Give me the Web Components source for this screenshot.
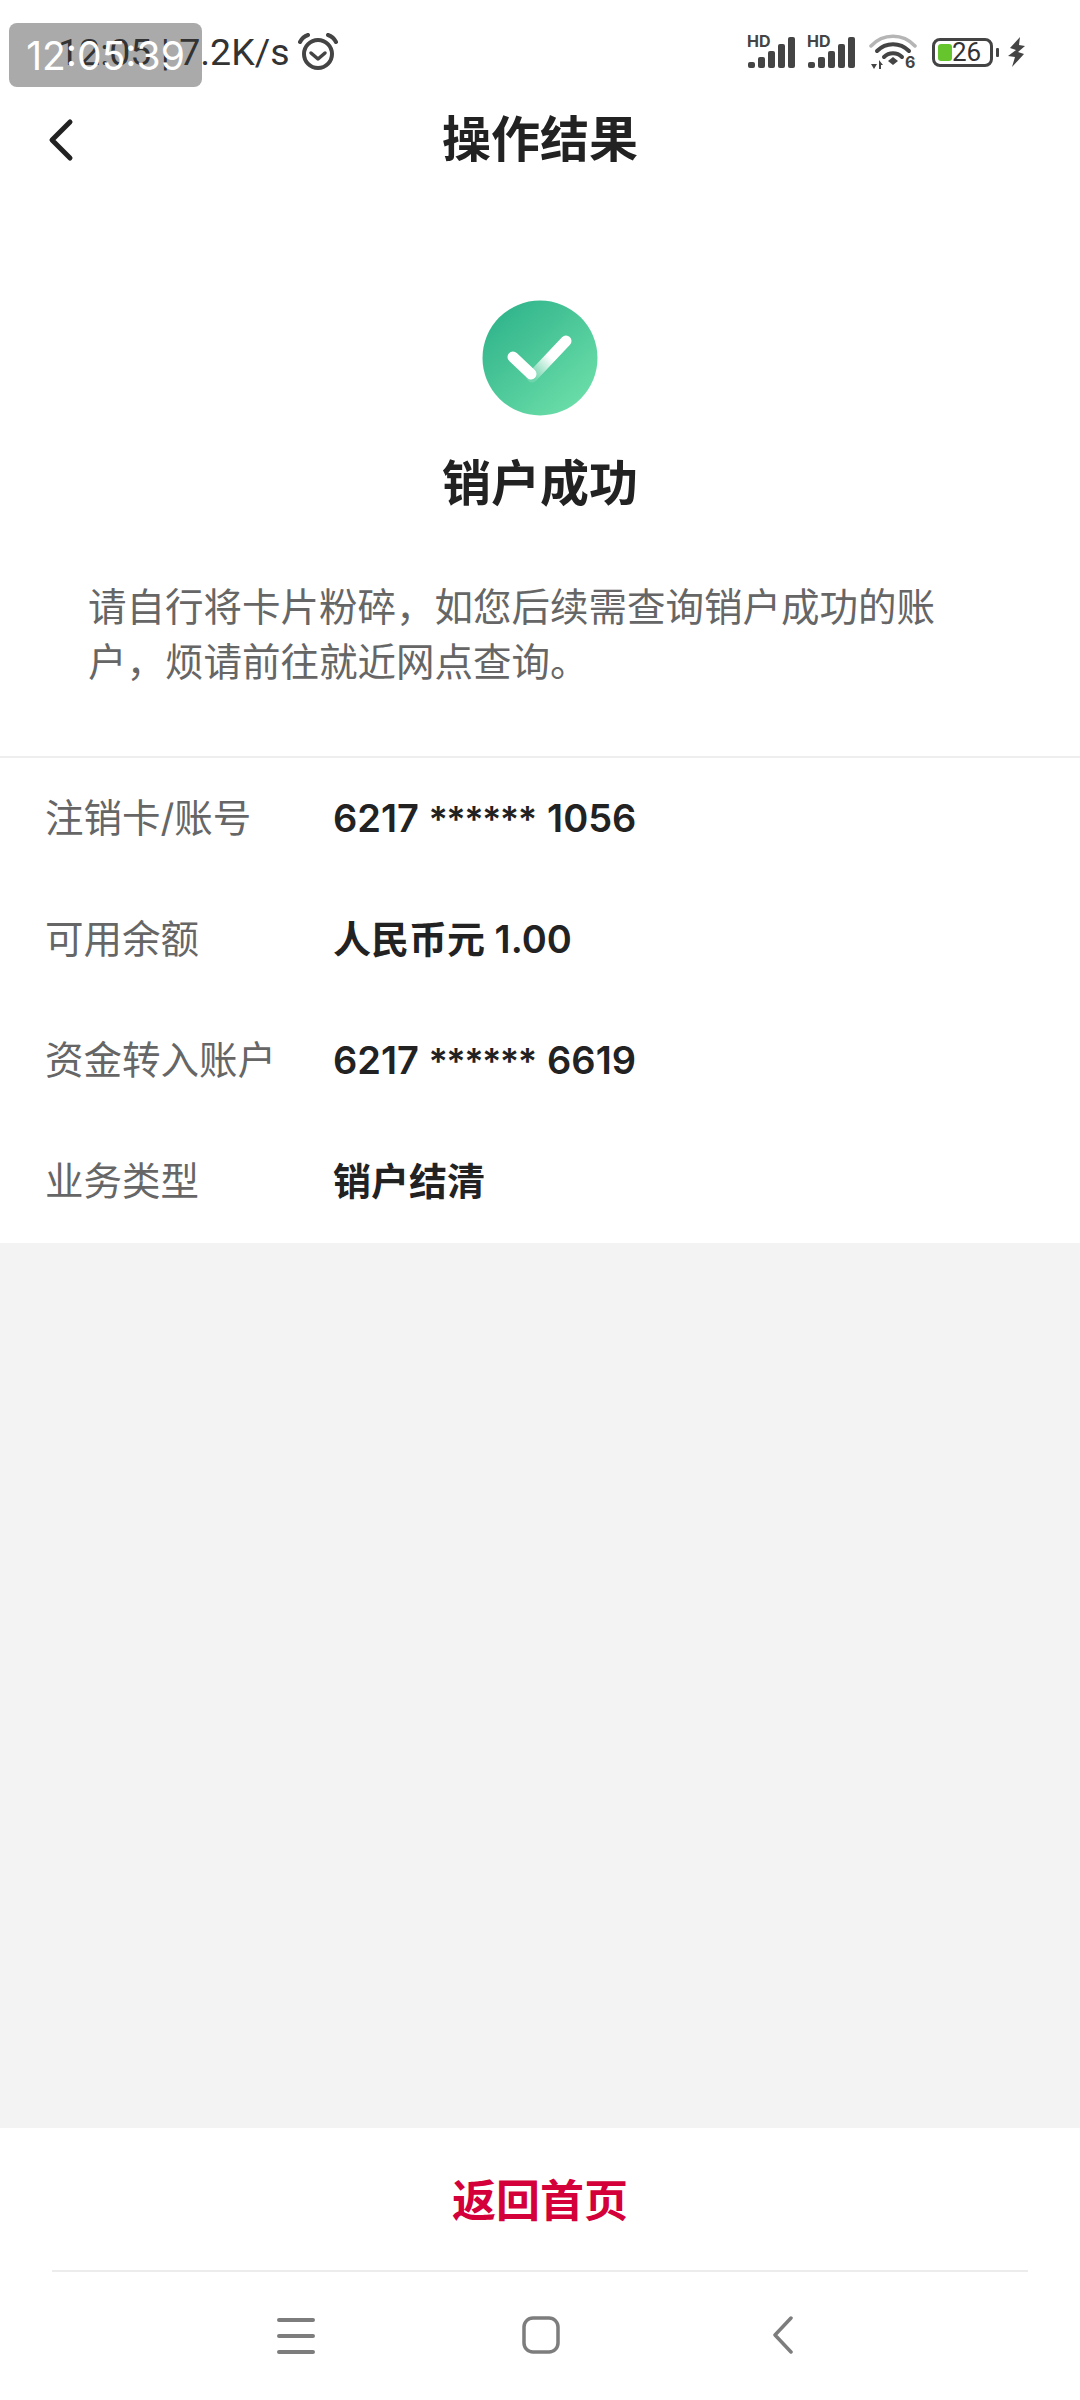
<!DOCTYPE html>
<html lang="zh">
<head>
<meta charset="utf-8">
<title>操作结果</title>
<style>
    html, body { margin: 0; padding: 0; background: #fff; }
    body { font-family: Inter, "Noto Sans CJK SC", sans-serif; }
</style>
</head>
<body>
<app-shell>
    <status-bar time="12:05" speed="7.2K/s" stamp="12:05:39" battery="26"></status-bar>
    <nav-header>操作结果</nav-header>
    <result-head title="销户成功">请自行将卡片粉碎，如您后续需查询销户成功的账户，烦请前往就近网点查询。</result-head>
    <detail-list>
        <detail-row label="注销卡/账号">6217 <span class="mask">******</span> 1056</detail-row>
        <detail-row label="可用余额">人民币元 1.00</detail-row>
        <detail-row label="资金转入账户">6217 <span class="mask">******</span> 6619</detail-row>
        <detail-row label="业务类型">销户结清</detail-row>
    </detail-list>
    <bottom-action>返回首页</bottom-action>
    <system-nav></system-nav>
</app-shell>

<script>
const FONT = 'Inter, "Noto Sans CJK SC", sans-serif';

class AppShell extends HTMLElement {
    constructor() {
        super();
        this.attachShadow({ mode: 'open' });
        this.shadowRoot.innerHTML = `
            <style>
                :host {
                    display: flex;
                    flex-direction: column;
                    width: 1080px;
                    height: 2400px;
                    background: #f3f3f3;
                    overflow: hidden;
                }
                ::slotted(detail-list) { flex: 1; }
            </style>
            <slot></slot>
        `;
    }
}

const signalIcon = `
    <svg width="50" height="44" viewBox="0 -6 50 44">
        <text x="0" y="11" font-family="Inter, sans-serif" font-size="16" font-weight="700" fill="#444">HD</text>
        <rect x="1" y="26" width="7" height="6" rx="2" fill="#444"/>
        <rect x="11" y="21" width="7" height="11" rx="2" fill="#444"/>
        <rect x="21" y="15" width="7" height="17" rx="2" fill="#444"/>
        <rect x="31" y="8" width="7" height="24" rx="2" fill="#444"/>
        <rect x="41" y="1" width="7" height="31" rx="2" fill="#444"/>
    </svg>`;

class StatusBar extends HTMLElement {
    constructor() {
        super();
        this.attachShadow({ mode: 'open' });
        this.shadowRoot.innerHTML = `
            <style>
                :host {
                    display: flex;
                    align-items: center;
                    height: 104px;
                    padding: 0 55px 0 58px;
                    box-sizing: border-box;
                    background: #fff;
                    color: #333;
                    position: relative;
                    font-family: Roboto, sans-serif;
                }
                .left { display: flex; align-items: center; font-size: 37.5px; white-space: pre; position: relative; z-index: 1; }
                .alarm { margin-left: 8px; }
                .right { margin-left: auto; display: flex; align-items: center; }
                .right svg { display: block; }
                .sig2 { margin-left: 10px; }
                .wifi { margin-left: 12px; }
                .batt {
                    margin-left: 15px;
                    width: 61px;
                    height: 29px;
                    box-sizing: border-box;
                    border: 3px solid #444;
                    border-radius: 8px;
                    padding: 3px;
                    display: flex;
                    align-items: center;
                    font-size: 26px;
                    color: #333;
                }
                .fill { width: 14px; height: 17px; background: #66c52c; border-radius: 3px; flex: none; }
                .num { line-height: 20px; }
                .tip { width: 3px; height: 9px; background: #444; margin-left: 3px; border-radius: 1px; }
                .bolt { margin-left: 9px; }
                .stamp-bg {
                    position: absolute;
                    left: 9px;
                    top: 23px;
                    width: 193px;
                    height: 64px;
                    background: #aaa;
                    border-radius: 8px;
                }
                .stamp {
                    position: absolute;
                    left: 9px;
                    top: 24px;
                    width: 193px;
                    z-index: 2;
                    color: #fff;
                    font-family: Inter, sans-serif;
                    font-size: 39px;
                    line-height: 64px;
                    text-align: center;
                }
            </style>
            <div class="stamp-bg"></div>
            <div class="left">
                <span>${this.getAttribute('time')} | ${this.getAttribute('speed')}</span>
                <svg class="alarm" width="40" height="38" viewBox="0 0 40 38" fill="none" stroke="#444">
                    <circle cx="20" cy="21" r="14" stroke-width="4"/>
                    <path d="M13 20l7 6 7-6" stroke-width="3.5" stroke-linecap="round" stroke-linejoin="round"/>
                    <path d="M2 9C4 5 7 3 10 2M38 9C36 5 33 3 30 2" stroke-width="4" stroke-linecap="round"/>
                </svg>
            </div>
            <div class="right">
                ${signalIcon}
                <span class="sig2">${signalIcon}</span>
                <svg class="wifi" width="48" height="44" viewBox="0 -4 48 44" fill="none">
                    <path d="M2 12C14 -1 34 -1 46 12" stroke="#b5b5b5" stroke-width="3.5" stroke-linecap="round"/>
                    <path d="M8 17C17 8 31 8 40 17" stroke="#444" stroke-width="4" stroke-linecap="round"/>
                    <path d="M15 23C20 18 28 18 33 23" stroke="#444" stroke-width="4" stroke-linecap="round"/>
                    <path d="M19 27l5-4 5 4-5 4z" fill="#444"/>
                    <path d="M2 30h6l-3 5zM10 35v-9l4 5h-2v4z" fill="#444"/>
                    <text x="36" y="34" font-family="Inter, sans-serif" font-size="16" font-weight="700" fill="#444">6</text>
                </svg>
                <div class="batt"><span class="fill"></span><span class="num">${this.getAttribute('battery')}</span></div>
                <span class="tip"></span>
                <svg class="bolt" width="17" height="30" viewBox="0 0 17 30">
                    <path d="M12 0L2 11l6 2-8 6 7 1-3 10 12-13-6-2 7-6-6-1z" fill="#444"/>
                </svg>
            </div>
            <div class="stamp">${this.getAttribute('stamp')}</div>
        `;
    }
}

class NavHeader extends HTMLElement {
    constructor() {
        super();
        this.attachShadow({ mode: 'open' });
        this.shadowRoot.innerHTML = `
            <style>
                :host {
                    display: grid;
                    grid-template-columns: 120px 1fr 120px;
                    align-items: center;
                    height: 72px;
                    background: #fff;
                    font-family: ${FONT};
                }
                svg { margin-left: 46px; display: block; }
                .title { text-align: center; font-size: 49px; font-weight: 700; color: #222; line-height: 72px; }
            </style>
            <svg width="30" height="44" viewBox="0 0 30 44" fill="none">
                <path d="M24 4L6 22l18 18" stroke="#222" stroke-width="5" stroke-linecap="round" stroke-linejoin="round"/>
            </svg>
            <div class="title"><slot></slot></div>
            <span></span>
        `;
    }
}

class ResultHead extends HTMLElement {
    constructor() {
        super();
        this.attachShadow({ mode: 'open' });
        this.shadowRoot.innerHTML = `
            <style>
                :host {
                    display: flex;
                    flex-direction: column;
                    align-items: center;
                    background: #fff;
                    padding-top: 124px;
                    height: 582px;
                    box-sizing: border-box;
                    border-bottom: 2px solid #eee;
                    font-family: ${FONT};
                }
                svg { display: block; }
                h1 { margin: 32px 0 0; font-size: 49px; line-height: 72px; font-weight: 700; color: #222; }
                p {
                    margin: 60px 0 0;
                    align-self: stretch;
                    padding: 0 88px;
                    font-size: 38.5px;
                    line-height: 55px;
                    color: #666;
                }
            </style>
            <svg width="116" height="116" viewBox="0 0 116 116">
                <defs>
                    <linearGradient id="disc" x1="0.15" y1="0.1" x2="0.9" y2="0.95">
                        <stop offset="0" stop-color="#32b58c"/>
                        <stop offset="1" stop-color="#6ee0aa"/>
                    </linearGradient>
                    <linearGradient id="fade" gradientUnits="userSpaceOnUse" x1="50" y1="77" x2="84" y2="41">
                        <stop offset="0" stop-color="#fff" stop-opacity=".15"/>
                        <stop offset=".55" stop-color="#fff"/>
                    </linearGradient>
                </defs>
                <circle cx="58" cy="58" r="57.5" fill="url(#disc)"/>
                <path d="M50 77L84 41" stroke="url(#fade)" stroke-width="11" stroke-linecap="round" fill="none"/>
                <path d="M31 57L49 74" stroke="#fff" stroke-width="11" stroke-linecap="round" fill="none"/>
            </svg>
            <h1>${this.getAttribute('title')}</h1>
            <p><slot></slot></p>
        `;
    }
}

class DetailList extends HTMLElement {
    constructor() {
        super();
        this.attachShadow({ mode: 'open' });
        this.shadowRoot.innerHTML = `
            <style>
                :host { display: block; background: #f3f3f3; }
                .box { background: #fff; height: 485px; display: flex; flex-direction: column; }
            </style>
            <div class="box"><slot></slot></div>
        `;
    }
}

class DetailRow extends HTMLElement {
    constructor() {
        super();
        this.attachShadow({ mode: 'open' });
        this.shadowRoot.innerHTML = `
            <style>
                :host {
                    display: grid;
                    grid-template-columns: 288px 1fr;
                    align-items: baseline;
                    height: 121px;
                    padding-left: 45px;
                    box-sizing: border-box;
                    font-family: ${FONT};
                    line-height: 121px;
                }
                .label { font-size: 38.5px; color: #666; }
                .value { font-size: 38px; font-weight: 600; color: #222; }
                ::slotted(.mask) { font-size: 36px; letter-spacing: -1.6px; margin-right: 2px; }
            </style>
            <span class="label">${this.getAttribute('label')}</span>
            <span class="value"><slot></slot></span>
        `;
    }
}

class BottomAction extends HTMLElement {
    constructor() {
        super();
        this.attachShadow({ mode: 'open' });
        this.shadowRoot.innerHTML = `
            <style>
                :host {
                    display: flex;
                    align-items: center;
                    justify-content: center;
                    height: 142px;
                    padding-bottom: 3px;
                    box-sizing: border-box;
                    background: #fff;
                    font-family: ${FONT};
                    font-size: 44px;
                    font-weight: 700;
                    color: #d4003a;
                }
            </style>
            <slot></slot>
        `;
    }
}

class SystemNav extends HTMLElement {
    constructor() {
        super();
        this.attachShadow({ mode: 'open' });
        this.shadowRoot.innerHTML = `
            <style>
                :host { display: block; background: #fff; padding: 0 52px; height: 130px; box-sizing: border-box; }
                .bar {
                    border-top: 2px solid #ececec;
                    height: 100%;
                    box-sizing: border-box;
                    display: grid;
                    grid-template-columns: 245px 249px 1fr;
                    padding: 44px 0 0 225px;
                }
                svg { display: block; }
            </style>
            <div class="bar">
                <svg width="38" height="36" viewBox="0 0 38 36" style="margin-top:2px" stroke="#7d7d7d" stroke-width="4" stroke-linecap="round">
                    <path d="M2 2h34M2 18h34M2 34h34"/>
                </svg>
                <svg width="38" height="38" viewBox="0 0 38 38" fill="none">
                    <rect x="2" y="2" width="34" height="34" rx="9" stroke="#7d7d7d" stroke-width="3.5"/>
                </svg>
                <svg width="24" height="38" viewBox="0 0 24 38" fill="none">
                    <path d="M20 2L4 19l16 17" stroke="#7d7d7d" stroke-width="3.5" stroke-linecap="round" stroke-linejoin="round"/>
                </svg>
            </div>
        `;
    }
}

customElements.define('app-shell', AppShell);
customElements.define('status-bar', StatusBar);
customElements.define('nav-header', NavHeader);
customElements.define('result-head', ResultHead);
customElements.define('detail-list', DetailList);
customElements.define('detail-row', DetailRow);
customElements.define('bottom-action', BottomAction);
customElements.define('system-nav', SystemNav);
</script>
</body>
</html>
